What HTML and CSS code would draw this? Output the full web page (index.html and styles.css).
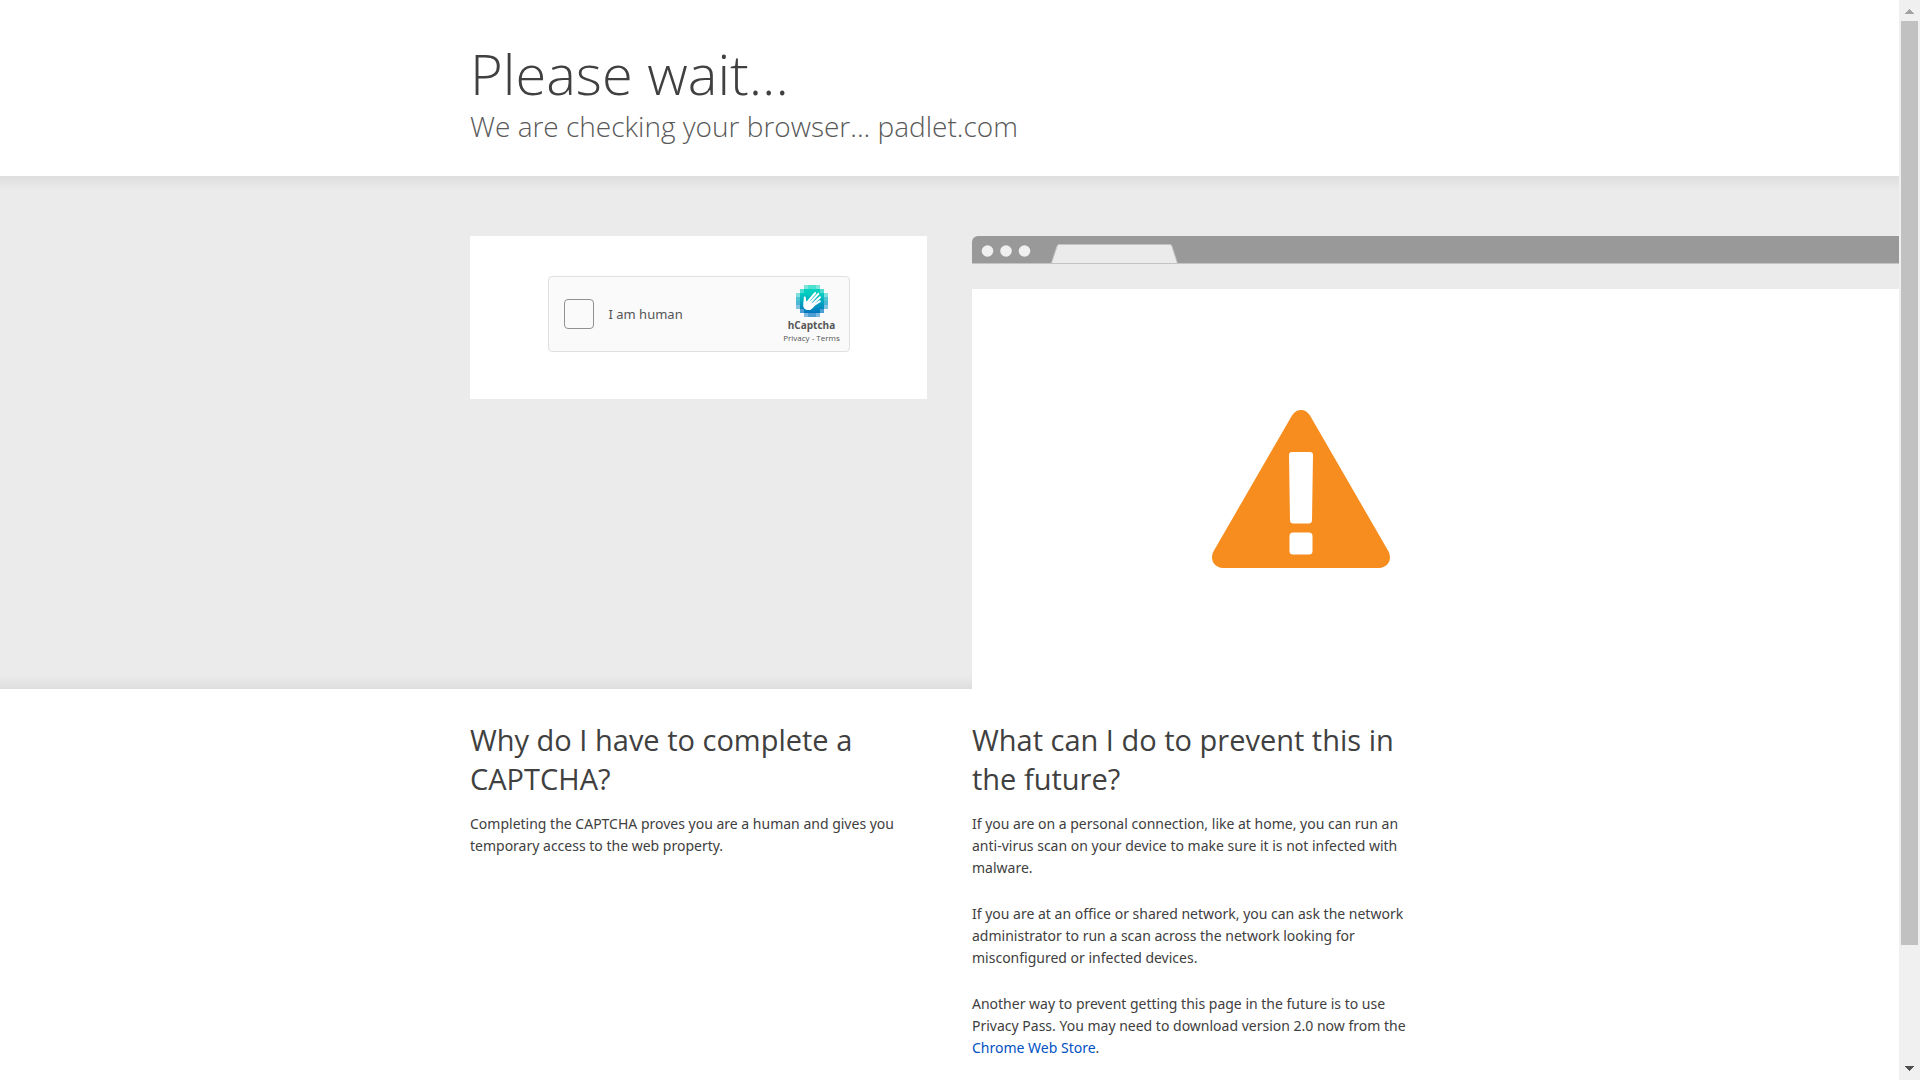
FILE: index.html
```html
<!DOCTYPE html>
<html lang="en">
<head>
<meta charset="utf-8">
<meta name="viewport" content="width=device-width, initial-scale=1">
<title>Please wait... | padlet.com</title>
<link rel="stylesheet" href="styles.css">
</head>
<body>
<div class="shell">
  <div class="page">
    <header class="grid intro">
      <div class="intro-text">
        <h1 class="title">Please wait...</h1>
        <p class="subtitle">We are checking your browser... padlet.com</p>
      </div>
    </header>

    <main>
      <section class="grid stage">
        <form class="card">
          <div class="captcha">
            <input class="captcha-check" type="checkbox" id="human">
            <label class="captcha-label" for="human">I am human</label>
            <div class="brand">
              <svg class="brand-logo" viewBox="0 0 32 32" aria-hidden="true">
                <defs>
                  <linearGradient id="sea" x1="0" y1="0" x2="0" y2="1">
                    <stop offset="0" stop-color="#00d4bf"/>
                    <stop offset=".2" stop-color="#00cbbf"/>
                    <stop offset="1" stop-color="#0074bf"/>
                  </linearGradient>
                </defs>
                <g shape-rendering="crispEdges">
                  <path fill="#4de1d2" d="M8 0h16v4H8z"/>
                  <path fill="#80e4da" d="M8 0h4v4H8zM20 0h4v4h-4z"/>
                  <path fill="#4ddbd2" d="M4 4h4v4H4zM24 4h4v4h-4z"/>
                  <path fill="#7fe0df" d="M0 8h4v4H0zM28 8h4v4h-4z"/>
                  <path fill="#4dc5d2" d="M0 12h4v4H0zM28 12h4v4h-4z"/>
                  <path fill="#4db6d2" d="M0 16h4v4H0zM28 16h4v4h-4z"/>
                  <path fill="#80c2df" d="M0 20h4v4H0zM28 20h4v4h-4z"/>
                  <path fill="#4d9ed2" d="M4 24h4v4H4zM24 24h4v4h-4zM12 28h8v4h-8z"/>
                  <path fill="#80b9df" d="M8 28h4v4H8zM20 28h4v4h-4z"/>
                  <path fill="url(#sea)" d="M8 4h16v4h4v16h-4v4H8v-4H4V8h4z"/>
                </g>
                <path fill="none" stroke="#fff" stroke-linecap="round" stroke-width="2" d="M12.500 16 19.200 8M14 18 22.300 8.800M16 19.500 24 12.200M16 21.500 23.900 16.200M9.300 18 8.800 12.500"/>
                <path fill="#fff" d="M7.900 13c1.200.5 1.800 2 2 3.500l2.600-1.300 6 5.500-.8 1.300c-1.600 2-3.200 3.300-5.700 3.100-3.200-.2-5-2.700-4.800-5.400.1-2.300.4-4.700.7-6.700z"/>
              </svg>
              <strong class="brand-name">hCaptcha</strong>
              <p class="brand-links"><a href="#privacy">Privacy</a> - <a href="#terms">Terms</a></p>
            </div>
          </div>
        </form>

        <div class="browser">
          <svg class="browser-tabs" viewBox="0 0 220 27" preserveAspectRatio="xMinYMin meet" aria-hidden="true">
            <g fill="#f0f0f0">
              <circle cx="15.500" cy="15" r="5.800"/>
              <circle cx="34" cy="15" r="5.800"/>
              <circle cx="52.500" cy="15" r="5.800"/>
            </g>
            <path fill="#ebebeb" stroke="#c4c4c4" d="M78 28c1.500 0 1.800-2 2.300-3.500L85 10.500c.5-1.500 1-2 2.500-2h110c1.500 0 2 .5 2.500 2l4.500 14c.5 1.500.8 3.500 2.300 3.500"/>
          </svg>
          <div class="browser-view">
            <svg class="warning" viewBox="0 0 178 158" role="img" aria-label="Warning">
              <path fill="#f78d1f" d="M80 5.500c5-7.300 13-7.300 18 0l78 135c5 8.500 0 17.500-9 17.500H11C2 158-3 149 2 140.500z"/>
              <path fill="#fff" d="M80 42h18q3 0 3 3l-1 65q0 3.500-3.500 3.500h-15Q78 113.500 78 110l-1-65q0-3 3-3zM81 122.500h16q3.500 0 3.500 3.500v15q0 3.500-3.500 3.500H81q-3.500 0-3.500-3.500v-15q0-3.500 3.500-3.500z"/>
            </svg>
          </div>
        </div>
      </section>

      <section class="grid faq">
        <article class="why">
          <h2 class="question">Why do I have to complete a CAPTCHA?</h2>
          <p class="answer">Completing the CAPTCHA proves you are a human and gives you temporary access to the web property.</p>
        </article>
        <article class="prevent">
          <h2 class="question">What can I do to prevent this in the future?</h2>
          <p class="answer">If you are on a personal connection, like at home, you can run an anti-virus scan on your device to make sure it is not infected with malware.</p>
          <p class="answer">If you are at an office or shared network, you can ask the network administrator to run a scan across the network looking for misconfigured or infected devices.</p>
          <p class="answer">Another way to prevent getting this page in the future is to use Privacy Pass. You may need to download version 2.0 now from the <a class="link" href="#store">Chrome Web Store</a>.</p>
        </article>
      </section>
    </main>
  </div>

  <div class="scrollbar" aria-hidden="true">
    <svg class="scroll-arrow" viewBox="0 0 21 21" shape-rendering="crispEdges"><path fill="#a3a3a3" d="M10 9h1v1h1v1h1v1h1v1h1v1H6v-1h1v-1h1v-1h1v-1h1z"/></svg>
    <div class="scroll-track"><div class="scroll-thumb"></div></div>
    <svg class="scroll-arrow" viewBox="0 0 21 21" shape-rendering="crispEdges"><path fill="#505050" d="M6 7h9v1h-1v1h-1v1h-1v1h-1v1h-1v-1H9v-1H8V9H7V8H6z"/></svg>
  </div>
</div>
</body>
</html>
```

FILE: styles.css
```css
* {
  box-sizing: border-box;
}

body,
h1,
h2,
p {
  margin: 0;
}

body {
  background: #fff;
  color: #404040;
  font-family: "Noto Sans", "Open Sans", sans-serif;
  font-size: 14px;
  line-height: 22px;
}

a {
  color: inherit;
  text-decoration: none;
}

.shell {
  display: flex;
  height: 100vh;
}

.page {
  flex: 1;
  min-width: 0;
  overflow: hidden;
}

/* Two text columns, with outer tracks that take the rest of the window */
.grid {
  display: grid;
  grid-template-columns: minmax(0, 1fr) minmax(0, 457px) 45px minmax(0, 457px) minmax(0, 1fr);
}

.intro {
  padding: 37px 0 33px;
}

.intro-text {
  grid-column: 2 / 5;
}

.title,
.subtitle,
.question {
  font-family: "Open Sans", "Noto Sans", sans-serif;
}

.title {
  font-size: 56px;
  font-weight: 300;
  line-height: 72px;
}

.subtitle {
  color: #595959;
  font-size: 28px;
  font-weight: 300;
  line-height: 34px;
}

.stage {
  padding-top: 60px;
  background: linear-gradient(#dedede, #ebebeb 14px, #ebebeb calc(100% - 14px), #dedede);
}

.card {
  grid-column: 2;
  align-self: start;
  display: flex;
  justify-content: center;
  padding: 40px 0 47px;
  background: #fff;
}

.captcha {
  display: flex;
  align-items: center;
  width: 302px;
  height: 76px;
  padding: 0 8px 0 15px;
  border: 1px solid #e0e0e0;
  border-radius: 4px;
  background: #fafafa;
}

.captcha-check {
  appearance: none;
  width: 30px;
  height: 30px;
  margin: 0;
  border: 1px solid #919191;
  border-radius: 4px;
  background: #fafafa;
}

.captcha-label {
  flex: 1;
  padding-left: 15px;
  color: #555;
  font-size: 13px;
}

.brand {
  display: flex;
  flex-direction: column;
  align-items: center;
  width: 58px;
  color: #555;
  font-family: "Open Sans", "Noto Sans", sans-serif;
}

.brand-logo {
  width: 32px;
  height: 32px;
}

.brand-name {
  font-size: 10px;
  line-height: 16px;
}

.brand-links {
  font-size: 8px;
  line-height: 10px;
}

.browser {
  grid-column: 4 / 6;
}

.browser-tabs {
  display: block;
  width: 100%;
  height: 28px;
  border-bottom: 1px solid #c4c4c4;
  border-top-left-radius: 6px;
  background: #999;
}

.browser-view {
  display: flex;
  align-items: center;
  height: 400px;
  margin-top: 25px;
  padding-left: 240px;
  background: #fff;
}

.warning {
  width: 178px;
  height: 158px;
}

.faq {
  padding-top: 31px;
}

.why {
  grid-column: 2;
}

.prevent {
  grid-column: 4;
}

.question {
  margin-bottom: 15px;
  font-size: 29px;
  font-weight: 400;
  line-height: 39px;
}

.answer {
  margin-bottom: 24px;
  padding-right: 16px;
}

.link {
  color: #0051c3;
}

.scrollbar {
  display: flex;
  flex-direction: column;
  width: 21px;
  background: #f0f0f0;
}

.scroll-arrow {
  width: 21px;
  height: 21px;
}

.scroll-track {
  flex: 1;
  padding: 0 2px;
}

.scroll-thumb {
  height: 89%;
  background: #c1c1c1;
}
```
